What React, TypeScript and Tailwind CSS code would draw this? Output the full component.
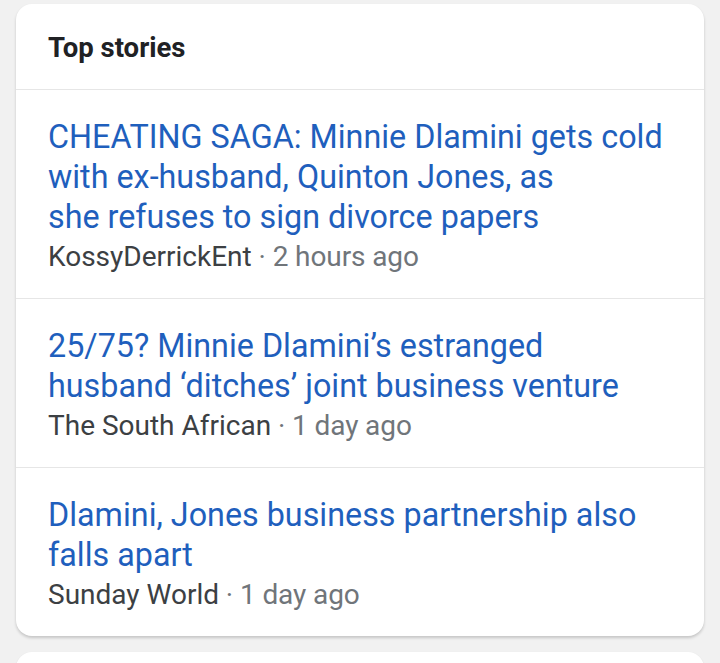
import React from "react";

type Story = { lines: string[]; source: string; time: string };

const stories: Story[] = [
  {
    lines: [
      "CHEATING SAGA: Minnie Dlamini gets cold",
      "with ex-husband, Quinton Jones, as",
      "she refuses to sign divorce papers",
    ],
    source: "KossyDerrickEnt",
    time: "2 hours ago",
  },
  {
    lines: [
      "25/75? Minnie Dlamini\u2019s estranged",
      "husband \u2018ditches\u2019 joint business venture",
    ],
    source: "The South African",
    time: "1 day ago",
  },
  {
    lines: ["Dlamini, Jones business partnership also", "falls apart"],
    source: "Sunday World",
    time: "1 day ago",
  },
];

export default function App() {
  return (
    <div
      className="min-h-[663px] w-[720px] bg-[#f1f1f1] pt-[4px] overflow-hidden"
      style={{ fontFamily: "Roboto, 'Noto Sans', sans-serif" }}
    >
      <div className="mx-[16px] rounded-[16px] bg-white shadow-[0_2px_3px_rgba(0,0,0,0.18)]">
        <div className="px-[32px] pt-[24px] pb-[21px] text-[27.5px] leading-[40px] font-bold text-[#202124]">
          Top stories
        </div>
        {stories.map((s, i) => (
          <div key={i} className="border-t border-[#e6e6e6] px-[32px] pt-[27px] pb-[21px]">
            <div className="text-[32.3px] leading-[40px] text-[#1f5fbd]">
              {s.lines.map((l, j) => (
                <div key={j} className="whitespace-nowrap">{l}</div>
              ))}
            </div>
            <div className="text-[28px] leading-[40px] whitespace-nowrap">
              <span className="text-[#3c4043]">{s.source}</span>
              <span className="text-[#70757a] tracking-[-0.1px]"> · {s.time}</span>
            </div>
          </div>
        ))}
      </div>
      <div className="mx-[16px] mt-[16px] h-[40px] rounded-t-[16px] bg-white shadow-[0_1px_2px_rgba(0,0,0,0.12)]" />
    </div>
  );
}
